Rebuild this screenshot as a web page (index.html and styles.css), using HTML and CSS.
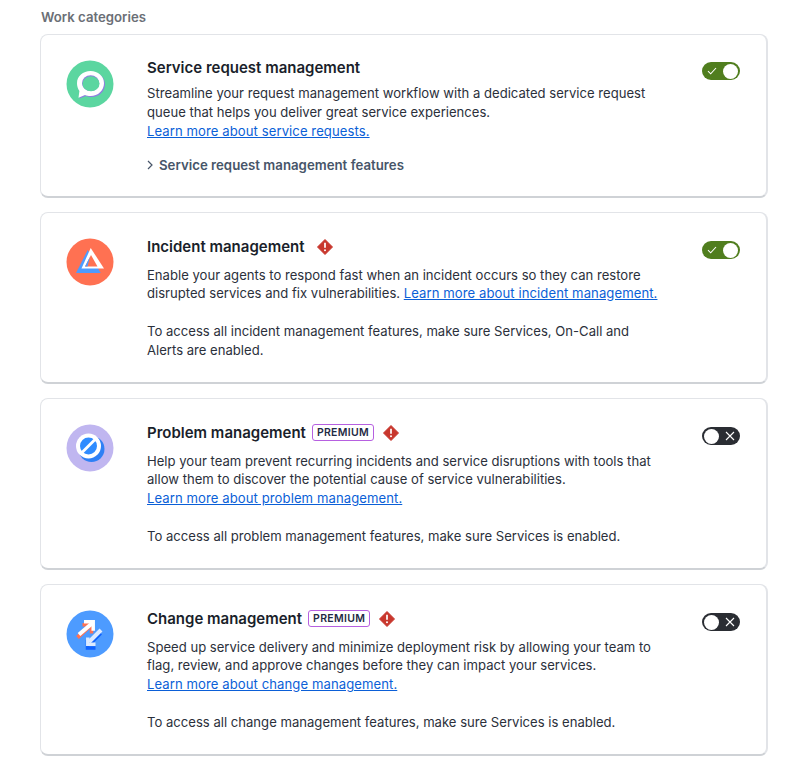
FILE: index.html
```html
<!DOCTYPE html>
<html lang="en">
<head>
    <title>Work categories</title>
    <link rel="stylesheet" href="styles.css">
</head>
<body>
<h2 class="section-title">Work categories</h2>
<div class="card-list">
    <div class="card card-first">
        <div class="card-icon">
            <svg width="48" height="48" viewBox="0 0 48 48">
                <circle cx="24" cy="24" r="23.500" fill="#5bd6a0"/>
                <path d="M25.500 12c7.500 0 13.500 5 13.500 12.200S33 37 25.500 37c-2 0-4-.3-5.500-1L13.500 38.500l.9-6.500C12.800 29.800 12 27.200 12 24.200 12 17 18 12 25.500 12z" fill="#8f7ee0"/>
                <path d="M24.500 11c7.500 0 13.500 5 13.500 12.200S32 36 24.500 36c-2 0-4-.3-5.500-1l-6.500 2.700.9-6.800c-1.600-2.200-2.400-4.800-2.400-7.700C11 16 17 11 24.500 11z" fill="#fff"/>
                <ellipse cx="24.600" cy="23.200" rx="8.600" ry="7.900" fill="#8f7ee0"/>
                <ellipse cx="25" cy="23.800" rx="8.500" ry="7.500" fill="#5bd6a0"/>
            </svg>
        </div>
        <div class="card-body">
            <div class="card-heading"><h3>Service request management</h3></div>
            <p>Streamline your request management workflow with a dedicated service request queue that helps you deliver great service experiences.<br><a href="#">Learn more about service requests.</a></p>
            <div class="features">
                <svg width="8" height="10" viewBox="0 0 8 10"><path d="M2 1l4 4-4 4" fill="none" stroke="#475569" stroke-width="1.200"/></svg>
                <span>Service request management features</span>
            </div>
        </div>
        <div class="toggle toggle-on">
            <svg width="10" height="8" viewBox="0 0 10 8"><path d="M1 4.200l2.700 2.600L9 1" fill="none" stroke="#fff" stroke-width="1.100"/></svg>
            <span class="knob"></span>
        </div>
    </div>

    <div class="card">
        <div class="card-icon">
            <svg width="48" height="48" viewBox="0 0 48 48">
                <circle cx="24" cy="24" r="23.500" fill="#ff7152"/>
                <path d="M21.700 12L10 35h24.700z" fill="#4d9bff"/>
                <path d="M24.700 10L38 30.500H15.500z" fill="#fff"/>
                <path d="M25 17L31.500 28.500H19z" fill="#ff7152"/>
                <path d="M24 18.800L19 28.500h2.500z" fill="#4d9bff"/>
            </svg>
        </div>
        <div class="card-body">
            <div class="card-heading">
                <h3>Incident management</h3>
                <svg class="warn warn-solo" width="16" height="16" viewBox="0 0 16 16"><path d="M8 .5l7.500 7.500L8 15.500.5 8z" fill="#c8372d" stroke="#c8372d" stroke-linejoin="round"/><path d="M8 3.800v5" stroke="#fff" stroke-width="1.700"/><circle cx="8" cy="11.300" r="1" fill="#fff"/></svg>
            </div>
            <p>Enable your agents to respond fast when an incident occurs so they can restore disrupted services and fix vulnerabilities. <a href="#">Learn more about incident management.</a></p>
            <p class="note">To access all incident management features, make sure Services, On-Call and Alerts are enabled.</p>
        </div>
        <div class="toggle toggle-on">
            <svg width="10" height="8" viewBox="0 0 10 8"><path d="M1 4.200l2.700 2.600L9 1" fill="none" stroke="#fff" stroke-width="1.100"/></svg>
            <span class="knob"></span>
        </div>
    </div>

    <div class="card">
        <div class="card-icon">
            <svg width="48" height="48" viewBox="0 0 48 48">
                <circle cx="24" cy="24" r="23.500" fill="#c0b6f0"/>
                <circle cx="25.500" cy="25" r="13" fill="#2f80f5"/>
                <circle cx="22.500" cy="22" r="12.500" fill="#fff"/>
                <circle cx="22.500" cy="22" r="8.500" fill="#2f8cff"/>
                <path d="M15 27.500L28 14.500l2 2L17 29.500z" fill="#fff"/>
            </svg>
        </div>
        <div class="card-body">
            <div class="card-heading">
                <h3>Problem management</h3>
                <span class="premium">PREMIUM</span>
                <svg class="warn" width="16" height="16" viewBox="0 0 16 16"><path d="M8 .5l7.500 7.500L8 15.500.5 8z" fill="#c8372d" stroke="#c8372d" stroke-linejoin="round"/><path d="M8 3.800v5" stroke="#fff" stroke-width="1.700"/><circle cx="8" cy="11.300" r="1" fill="#fff"/></svg>
            </div>
            <p>Help your team prevent recurring incidents and service disruptions with tools that allow them to discover the potential cause of service vulnerabilities.<br><a href="#">Learn more about problem management.</a></p>
            <p class="note">To access all problem management features, make sure Services is enabled.</p>
        </div>
        <div class="toggle toggle-off">
            <span class="knob"></span>
            <svg width="10" height="10" viewBox="0 0 10 10"><path d="M1 1l8 8M9 1l-8 8" fill="none" stroke="#fff" stroke-width="1.100"/></svg>
        </div>
    </div>

    <div class="card">
        <div class="card-icon">
            <svg width="48" height="48" viewBox="0 0 48 48">
                <circle cx="24" cy="24" r="23.500" fill="#4d9bff"/>
                <g fill="none" stroke="#ff7152">
                    <path d="M11.500 27.500L25 15" stroke-width="4"/>
                    <path d="M16.500 14.800h9v8.700" stroke-width="3.500"/>
                </g>
                <g fill="none" stroke="#fff">
                    <path d="M13 24.500L26.500 13" stroke-width="4"/>
                    <path d="M18 11.800h9.200v9" stroke-width="3.500"/>
                </g>
                <g fill="none" stroke="#0f62fe">
                    <path d="M34.500 23L23 34.500" stroke-width="4"/>
                    <path d="M21.500 30v8h8" stroke-width="3.500"/>
                </g>
                <g fill="none" stroke="#dceaff">
                    <path d="M35 20L23 32" stroke-width="4"/>
                    <path d="M21.800 27.500v6.700h7.700" stroke-width="3.500"/>
                </g>
            </svg>
        </div>
        <div class="card-body">
            <div class="card-heading">
                <h3>Change management</h3>
                <span class="premium">PREMIUM</span>
                <svg class="warn" width="16" height="16" viewBox="0 0 16 16"><path d="M8 .5l7.500 7.500L8 15.500.5 8z" fill="#c8372d" stroke="#c8372d" stroke-linejoin="round"/><path d="M8 3.800v5" stroke="#fff" stroke-width="1.700"/><circle cx="8" cy="11.300" r="1" fill="#fff"/></svg>
            </div>
            <p>Speed up service delivery and minimize deployment risk by allowing your team to flag, review, and approve changes before they can impact your services.<br><a href="#">Learn more about change management.</a></p>
            <p class="note">To access all change management features, make sure Services is enabled.</p>
        </div>
        <div class="toggle toggle-off">
            <span class="knob"></span>
            <svg width="10" height="10" viewBox="0 0 10 10"><path d="M1 1l8 8M9 1l-8 8" fill="none" stroke="#fff" stroke-width="1.100"/></svg>
        </div>
    </div>
</div>
</body>
</html>
```

FILE: styles.css
```css
body{
    margin: 0;
    padding: 10px 44px 0 40px;
    background-color: #fff;
    font-family: Inter, "Liberation Sans", sans-serif;
    color: #1f2937;
}
.section-title{
    margin: 0 0 9px 1px;
    font-size: 13.2px;
    line-height: 15px;
    font-weight: 600;
    color: #6b6f76;
}
.card-list{
    display: flex;
    flex-direction: column;
    gap: 14px;
}
.card{
    display: flex;
    align-items: flex-start;
    height: 172px;
    box-sizing: border-box;
    padding: 23px 26px 0 25px;
    background-color: #fff;
    border: 1px solid #e2e4e8;
    border-bottom: 2px solid #cfd2d6;
    border-right: 2px solid #e2e4e8;
    border-radius: 8px;
}
.card-first{
    height: 164px;
}
.card-icon{
    width: 48px;
    height: 48px;
    margin-top: 2px;
    flex-shrink: 0;
}
.card-body{
    width: 516px;
    margin-left: 33px;
    flex-shrink: 0;
}
.card-heading{
    display: flex;
    align-items: center;
    height: 21px;
    margin-bottom: 8.5px;
}
.card-first .card-heading{
    height: 19px;
    margin-bottom: 7px;
}
.card-heading h3{
    margin: 0;
    font-size: 15px;
    line-height: 19px;
    font-weight: 600;
    color: #1a1f2b;
}
.card-body p{
    margin: 0;
    font-size: 13.1px;
    line-height: 18.9px;
    color: #2b303b;
}
.card-body a{
    color: #0b5fd7;
    letter-spacing: .08px;
    text-decoration: underline;
}
.card-body .note{
    margin-top: 18.7px;
}
.features{
    display: flex;
    align-items: center;
    gap: 5px;
    margin-top: 15px;
    font-size: 13.25px;
    font-weight: 600;
    line-height: 19px;
    color: #475569;
}
.features svg{
    margin-left: -1px;
}
.premium{
    margin-left: 6px;
    padding: 0 4px;
    height: 15px;
    line-height: 15px;
    font-size: 10.5px;
    font-weight: 600;
    letter-spacing: .3px;
    color: #1f2a44;
    border: 1px solid #b660e0;
    border-radius: 3px;
}
.warn{
    margin-left: 9px;
}
.warn-solo{
    margin-left: 12px;
}
.toggle{
    display: flex;
    align-items: center;
    justify-content: space-between;
    box-sizing: border-box;
    width: 38px;
    height: 18px;
    margin-left: auto;
    margin-top: 5px;
    padding: 0 2px;
    border-radius: 9px;
}
.card-first .toggle{
    margin-top: 4px;
}
.toggle-on{
    padding-left: 5px;
    background-color: #507e1e;
}
.toggle-off{
    padding-right: 5px;
    background-color: #2a2d33;
}
.knob{
    width: 15px;
    height: 15px;
    border-radius: 50%;
    background-color: #fff;
}
```
